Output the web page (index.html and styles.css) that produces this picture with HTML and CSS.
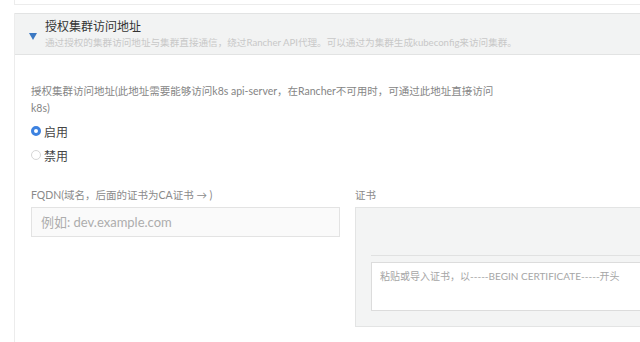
FILE: index.html
```html
<!DOCTYPE html>
<html lang="zh-CN">
<head>
  <meta charset="UTF-8">
  <title>授权集群访问地址</title>
  <link rel="stylesheet" href="styles.css">
</head>
<body>
  <div class="page">
    <div class="prev-card"></div>

    <section class="card">
      <div class="card-head">
        <span class="caret"></span>
        <div>
          <h3>授权集群访问地址</h3>
          <p class="sub">通过授权的集群访问地址与集群直接通信，绕过Rancher API代理。可以通过为集群生成kubeconfig来访问集群。</p>
        </div>
      </div>

      <div class="card-body">
        <p class="desc">授权集群访问地址(此地址需要能够访问k8s api-server，在Rancher不可用时，可通过此地址直接访问k8s)</p>

        <label class="radio"><span class="dot on"></span>启用</label>
        <label class="radio"><span class="dot"></span>禁用</label>

        <div class="row">
          <div class="col">
            <div class="label">FQDN(域名，后面的证书为CA证书 → )</div>
            <div class="input">例如: dev.example.com</div>
          </div>
          <div class="col">
            <div class="label">证书</div>
            <div class="cert">
              <div class="cert-inner">
                <div class="textarea">粘贴或导入证书，以-----BEGIN CERTIFICATE-----开头</div>
              </div>
            </div>
          </div>
        </div>
      </div>
    </section>
  </div>
</body>
</html>
```

FILE: styles.css
```css
body {
  margin: 0;
  background: #fff;
  font-family: Lato, "Noto Sans CJK SC", sans-serif;
  color: #777;
}

.page {
  width: 640px;
  height: 342px;
  overflow: hidden;
}

.prev-card {
  margin-left: 14px;
  width: 700px;
  height: 4px;
  border-left: 1px solid #ececec;
  border-bottom: 1px solid #ececec;
}

.card {
  margin: 8px 0 0 14px;
  width: 700px;
  height: 400px;
  border-left: 1px solid #ececec;
}

.card-head {
  display: flex;
  align-items: center;
  gap: 8px;
  height: 40px;
  padding-left: 14px;
  background: #f2f3f3;
  border: 1px solid #e2e3e3;
  border-left: 0;
}

.caret {
  width: 0;
  height: 0;
  border-left: 4px solid transparent;
  border-right: 4px solid transparent;
  border-top: 7px solid #3b78c2;
  margin-top: 5px;
}

.card-head h3 {
  margin: 0;
  font-size: 12px;
  font-weight: 400;
  color: #333;
  line-height: 16px;
}

.card-head .sub {
  margin: 1px 0 0;
  font-size: 9.6px;
  line-height: 13px;
  color: #c8c8c8;
}

.card-body {
  padding: 28px 16px 0 16px;
}

.desc {
  margin: 0;
  width: 475px;
  font-size: 10.5px;
  line-height: 17px;
  color: #858585;
}

.radio {
  display: flex;
  align-items: center;
  gap: 3px;
  height: 24px;
  font-size: 12px;
  color: #444;
}

.radio:first-of-type {
  margin-top: 2px;
}

.dot {
  box-sizing: border-box;
  width: 10px;
  height: 10px;
  border-radius: 50%;
  border: 1px solid #d6d6d6;
  background: #fff;
}

.dot.on {
  border: 3px solid #3d82e0;
}

.row {
  display: flex;
  gap: 15px;
  margin-top: 21px;
}

.col {
  width: 309px;
}

.label {
  font-size: 10.5px;
  line-height: 14px;
  color: #8a8a8a;
  margin-bottom: 5px;
}

.input {
  box-sizing: border-box;
  height: 30px;
  padding: 0 9px;
  border: 1px solid #e3e3e3;
  background: #fafafa;
  font-size: 13px;
  line-height: 28px;
  color: #adadad;
}

.cert {
  box-sizing: border-box;
  height: 120px;
  background: #f3f4f4;
  border: 1px solid #e3e4e4;
  padding: 47px 0 0 15px;
}

.cert-inner {
  border-top: 1px solid #e0e1e1;
  padding-top: 6px;
}

.textarea {
  box-sizing: border-box;
  height: 49px;
  padding: 6px 8px;
  background: #fff;
  border: 1px solid #dcdcdc;
  font-size: 10px;
  line-height: 14px;
  color: #a6a6a6;
}
```
